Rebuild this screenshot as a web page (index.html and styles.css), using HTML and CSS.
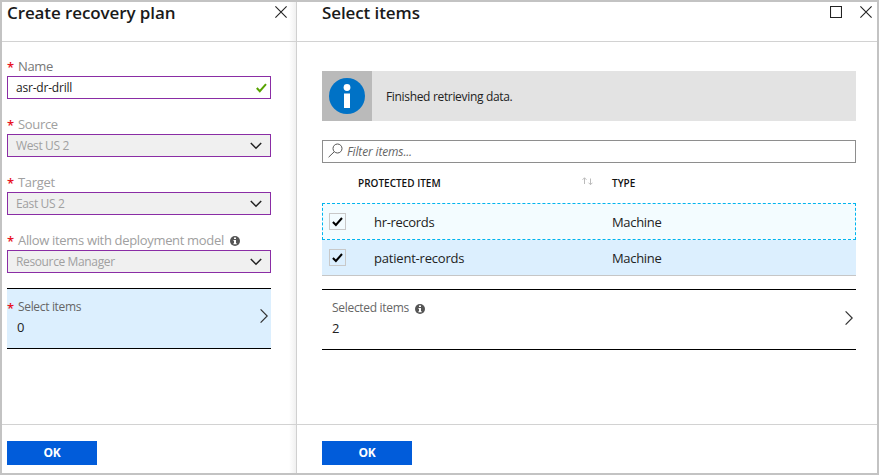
FILE: index.html
```html
<!DOCTYPE html>
<html lang="en">
<head>
<meta charset="utf-8">
<title>Create recovery plan</title>
<link rel="stylesheet" href="styles.css">
</head>
<body>
<div class="frame">
  <section class="blade plan">
    <header class="head">
      <h1 class="title t-plan">Create recovery plan</h1>
      <svg class="win" width="12" height="12" viewBox="0 0 12 12"><path d="M.4.4l11.2 11.2M11.6.4L.4 11.6"/></svg>
    </header>
    <div class="form">
      <div class="field">
        <div class="label name"><i class="req">*</i><span class="w-name">Name</span></div>
        <div class="box"><span class="w-asr">asr-dr-drill</span><svg class="tick" width="11" height="10" viewBox="0 0 11 10"><path d="M.8 5l3 3.2L10 1.2"/></svg></div>
      </div>
      <div class="field">
        <div class="label"><i class="req">*</i><span class="w-source">Source</span></div>
        <div class="box off"><span class="w-us">West US 2</span><svg class="chev" width="12" height="8" viewBox="0 0 12 8"><path d="M.8 1L6 6.2 11.2 1"/></svg></div>
      </div>
      <div class="field">
        <div class="label"><i class="req">*</i><span class="w-target">Target</span></div>
        <div class="box off"><span class="w-us">East US 2</span><svg class="chev" width="12" height="8" viewBox="0 0 12 8"><path d="M.8 1L6 6.2 11.2 1"/></svg></div>
      </div>
      <div class="field">
        <div class="label"><i class="req">*</i><span class="w-allow">Allow items with deployment model</span><svg class="info" width="10" height="10" viewBox="0 0 10 10"><circle cx="5" cy="5" r="5"/><path d="M4 1.6h2v1.5H4zM3.5 4H6v3.3h.7v1H3.4v-1H4V5h-.5z"/></svg></div>
        <div class="box off"><span class="w-rm">Resource Manager</span><svg class="chev" width="12" height="8" viewBox="0 0 12 8"><path d="M.8 1L6 6.2 11.2 1"/></svg></div>
      </div>
      <div class="picker active">
        <div class="picker-text">
          <div class="picker-label"><i class="req">*</i><span class="w-sel">Select items</span></div>
          <div class="picker-value">0</div>
        </div>
        <svg class="next" width="8" height="14" viewBox="0 0 8 14"><path d="M.6.4L7.2 7 .6 13.6"/></svg>
      </div>
    </div>
    <footer class="foot"><button class="ok">OK</button></footer>
  </section>
  <section class="blade items">
    <header class="head">
      <h1 class="title t-items">Select items</h1>
      <svg class="win" width="12" height="12" viewBox="0 0 12 12"><path d="M.5.5h11v11H.5z"/></svg>
      <svg class="win" width="12" height="12" viewBox="0 0 12 12"><path d="M.4.4l11.2 11.2M11.6.4L.4 11.6"/></svg>
    </header>
    <div class="content">
      <div class="notice">
        <div class="notice-icon"><svg width="36" height="36" viewBox="0 0 36 36"><circle cx="18" cy="18" r="18" fill="#0072c6"/><circle cx="18" cy="9.5" r="3.4" fill="#fff"/><path d="M15 15.5h6V30h-6z" fill="#fff"/></svg></div>
        <span class="w-fin">Finished retrieving data.</span>
      </div>
      <div class="filter"><svg width="15" height="15" viewBox="0 0 15 15"><circle cx="9.5" cy="5.5" r="4.5"/><path d="M6.2 8.8L.6 14.2"/></svg><span class="w-filter">Filter items...</span></div>
      <div class="row thead"><span></span><span class="w-prot">PROTECTED ITEM</span><svg class="sort" width="11" height="9" viewBox="0 0 11 9"><path d="M2.5 7V.8M.5 2.8l2-2 2 2M8.5 1.5v6.2M6.5 5.7l2 2 2-2"/></svg><span class="w-type">TYPE</span></div>
      <div class="row focus">
        <span class="check"><svg width="11" height="10" viewBox="0 0 11 10"><path d="M.9 5l3 3L10 1"/></svg></span>
        <span class="cell w-hr">hr-records</span><span></span><span class="w-mach">Machine</span>
      </div>
      <div class="row chosen">
        <span class="check"><svg width="11" height="10" viewBox="0 0 11 10"><path d="M.9 5l3 3L10 1"/></svg></span>
        <span class="cell w-pat">patient-records</span><span></span><span class="w-mach">Machine</span>
      </div>
      <div class="picker summary">
        <div class="picker-text">
          <div class="picker-label"><span class="w-seld">Selected items</span><svg class="info" width="10" height="10" viewBox="0 0 10 10"><circle cx="5" cy="5" r="5"/><path d="M4 1.6h2v1.5H4zM3.5 4H6v3.3h.7v1H3.4v-1H4V5h-.5z"/></svg></div>
          <div class="picker-value">2</div>
        </div>
        <svg class="next" width="8" height="14" viewBox="0 0 8 14"><path d="M.6.4L7.2 7 .6 13.6"/></svg>
      </div>
    </div>
    <footer class="foot"><button class="ok">OK</button></footer>
  </section>
</div>
</body>
</html>
```
FILE: styles.css
```css
* { box-sizing: border-box; }
body { margin: 0; font: 12px/18px "Open Sans", "Noto Sans", sans-serif; color: #222; }
svg { display: block; flex: none; fill: none; }
span { white-space: nowrap; }
.frame { display: flex; width: 879px; height: 475px; border: 2px solid #c3c3c3; background: #fff; }
.blade { display: flex; flex-direction: column; }
.plan { width: 295px; border-right: 1px solid #d0d0d0; background: linear-gradient(to left, #f0f0f0, #fff 7px); }
.items { flex: 1; }
.head { display: flex; align-items: flex-start; height: 40px; border-bottom: 1px solid #d2d2d2; }
.plan .head { padding: 0 9px 0 5px; }
.items .head { padding: 0 5px 0 25px; gap: 18px; }
.title { flex: 1; margin: 0; font-size: 17px; line-height: 22px; font-weight: 600; color: #1a1a1a; white-space: nowrap; letter-spacing: -.1px; }
.win { margin-top: 4px; stroke: #222; stroke-width: 1.1; }
.form { flex: 1; padding: 14px 25px 0 5px; }
.field { margin-bottom: 15px; }
.label { display: flex; align-items: center; height: 19px; margin-bottom: 1px; color: #a0a0a0; font-size: 13px; }
.label.name { color: #777; }
.req { width: 11px; margin-top: 2px; font: normal 600 13px/14px "Open Sans", sans-serif; color: #e81123; }
.info { margin: 3px 0 0 6px; fill: #555; }
.info path { fill: #fff; }
.box { display: flex; align-items: center; justify-content: space-between; height: 23px; border: 1px solid #8a2da5; padding: 0 3px 0 8px; background: #fff; color: #222; }
.off { background: #f0f0f0; color: #a0a0a0; padding-right: 8px; }
.tick { stroke: #57a300; stroke-width: 2; }
.chev { stroke: #222; stroke-width: 1.5; }
.picker { display: flex; align-items: center; justify-content: space-between; height: 61px; border: solid #000; border-width: 1px 0; padding-right: 3px; }
.picker-text { padding-bottom: 4px; }
.picker-label { display: flex; align-items: center; height: 20px; color: #666; }
.picker-value { height: 20px; line-height: 20px; font-size: 13px; }
.active { background: #dceffe; }
.active .picker-value { padding-left: 10px; }
.active .next { margin-top: -5px; }
.next { stroke: #333; stroke-width: 1.2; margin-top: -4px; }
.foot { height: 49px; border-top: 1px solid #d2d2d2; padding: 16px 5px 0; }
.items .foot { padding-left: 25px; }
.ok { display: block; width: 90px; height: 24px; padding: 0; border: 0; background: #015cda; color: #fff; font: 700 12px/24px "Open Sans", sans-serif; letter-spacing: -.3px; }
.content { flex: 1; padding: 29px 21px 0 25px; }
.notice { display: flex; align-items: center; gap: 14px; height: 50px; background: #e3e3e3; }
.notice .w-fin { padding-top: 2px; }
.notice-icon { display: grid; place-items: center; width: 50px; height: 50px; background: #bababa; }
.filter { display: flex; align-items: center; gap: 4px; height: 23px; margin-top: 19px; border: 1px solid #8e8e8e; padding-left: 5px; font-style: italic; color: #666; }
.filter svg { stroke: #555; stroke-width: 1; margin-top: -2px; }
.row { display: grid; grid-template-columns: 36px 225px 29px 1fr; align-items: center; height: 36px; font-size: 13px; }
.thead { height: 40px; font-size: 10px; font-weight: 600; color: #111; }
.sort { stroke: #bbb; margin: -3px 0 0 -1px; }
.focus { height: 37px; background: #f3fcff; outline: 1px dashed #00b4ee; outline-offset: -1px; }
.chosen { background: #dceffe; border-bottom: 1px solid #c6c6c6; }
.check { display: grid; place-items: center; width: 17px; height: 17px; margin-left: 7px; border: 1px solid #c8c8c8; }
.check path { stroke: #000; stroke-width: 2; }
.cell { padding-left: 16px; font-weight: 500; }
.summary { margin-top: 13px; padding-left: 10px; }
.w-name, .w-source, .w-target, .w-allow, .w-fin, .w-sel, .w-hr, .w-mach { letter-spacing: -.33px; }
.w-rm, .w-us { letter-spacing: -.37px; }
.w-seld { letter-spacing: -.3px; }
.w-asr, .w-pat { letter-spacing: -.2px; }
.w-filter { letter-spacing: -.15px; }
```
